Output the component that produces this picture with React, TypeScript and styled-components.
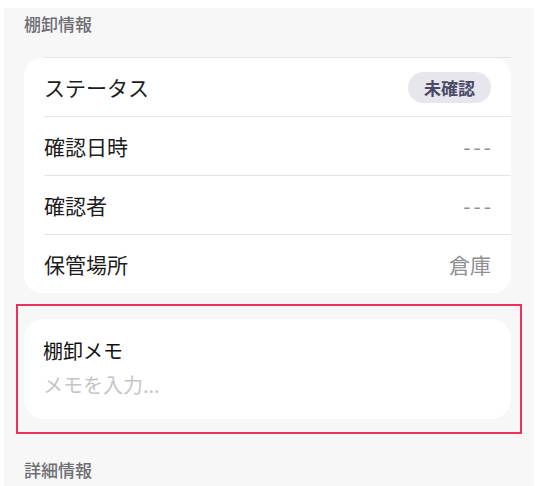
import React from "react";
import styled, { createGlobalStyle } from "styled-components";

const GlobalStyle = createGlobalStyle`
  html, body {
    margin: 0;
    padding: 0;
    background: #ffffff;
    font-family: "Noto Sans CJK JP", "Noto Sans", sans-serif;
  }
`;

const Panel = styled.div`
  margin: 8px 4px 0;
  padding: 0 23px 0 20px;
  background: #f7f7f8;
  height: 478px;
  overflow: hidden;
  box-sizing: border-box;
`;

const SectionTitle = styled.div<{ $top?: number }>`
  padding-top: ${(p) => (p.$top ?? 4)}px;
  height: 45px;
  line-height: 24px;
  font-size: 17px;
  font-weight: 500;
  color: #6d6d72;
`;

const TopRule = styled.div`
  height: 1px;
  margin-left: 20px;
  background: #e4e4e6;
`;

const Card = styled.div`
  background: #ffffff;
  border-radius: 18px;
  overflow: hidden;
`;

const Row = styled.div`
  display: flex;
  align-items: center;
  justify-content: space-between;
  height: 58px;
  margin-left: 20px;
  padding-right: 20px;
  border-bottom: 1px solid #e4e4e6;

  &:last-child {
    border-bottom: none;
  }
`;

const Label = styled.span`
  font-size: 21px;
  color: #1c1c1e;
`;

const Value = styled.span`
  font-size: 21px;
  color: #8e8e93;
`;

const Dashes = styled(Value)`
  letter-spacing: 3px;
  margin-right: -3px;
`;

const Badge = styled.span`
  display: inline-flex;
  align-items: center;
  height: 31px;
  padding: 0 16px;
  border-radius: 16px;
  background: #e6e6ec;
  color: #4a4966;
  font-size: 17px;
  font-weight: 700;
`;

const Highlight = styled.div`
  margin: 11px -11px 0 -8px;
  padding: 13px 9px 13px 6px;
  border: 2px solid #ee2f62;
`;

const MemoCard = styled.div`
  display: flex;
  flex-direction: column;
  gap: 10px;
  padding: 20px 19px 22px;
  background: #ffffff;
  border-radius: 20px;
`;

const MemoTitle = styled.div`
  font-size: 20px;
  line-height: 24px;
  color: #111111;
`;

const MemoInput = styled.input`
  border: none;
  outline: none;
  padding: 0;
  background: transparent;
  font-family: inherit;
  font-size: 20px;
  line-height: 24px;
  height: 24px;
  color: #1c1c1e;

  &::placeholder {
    color: #c5c5c9;
  }
`;

const rows: { label: string; value: string }[] = [
  { label: "確認日時", value: "---" },
  { label: "確認者", value: "---" },
  { label: "保管場所", value: "倉庫" },
];

export default function App() {
  return (
    <>
      <GlobalStyle />
      <Panel>
        <SectionTitle>棚卸情報</SectionTitle>
        <TopRule />
        <Card>
          <Row>
            <Label>ステータス</Label>
            <Badge>未確認</Badge>
          </Row>
          {rows.map((r) => (
            <Row key={r.label}>
              <Label>{r.label}</Label>
              {r.value === "---" ? <Dashes>{r.value}</Dashes> : <Value>{r.value}</Value>}
            </Row>
          ))}
        </Card>
        <Highlight>
          <MemoCard>
            <MemoTitle>棚卸メモ</MemoTitle>
            <MemoInput placeholder="メモを入力..." />
          </MemoCard>
        </Highlight>
        <SectionTitle $top={24}>詳細情報</SectionTitle>
      </Panel>
    </>
  );
}
